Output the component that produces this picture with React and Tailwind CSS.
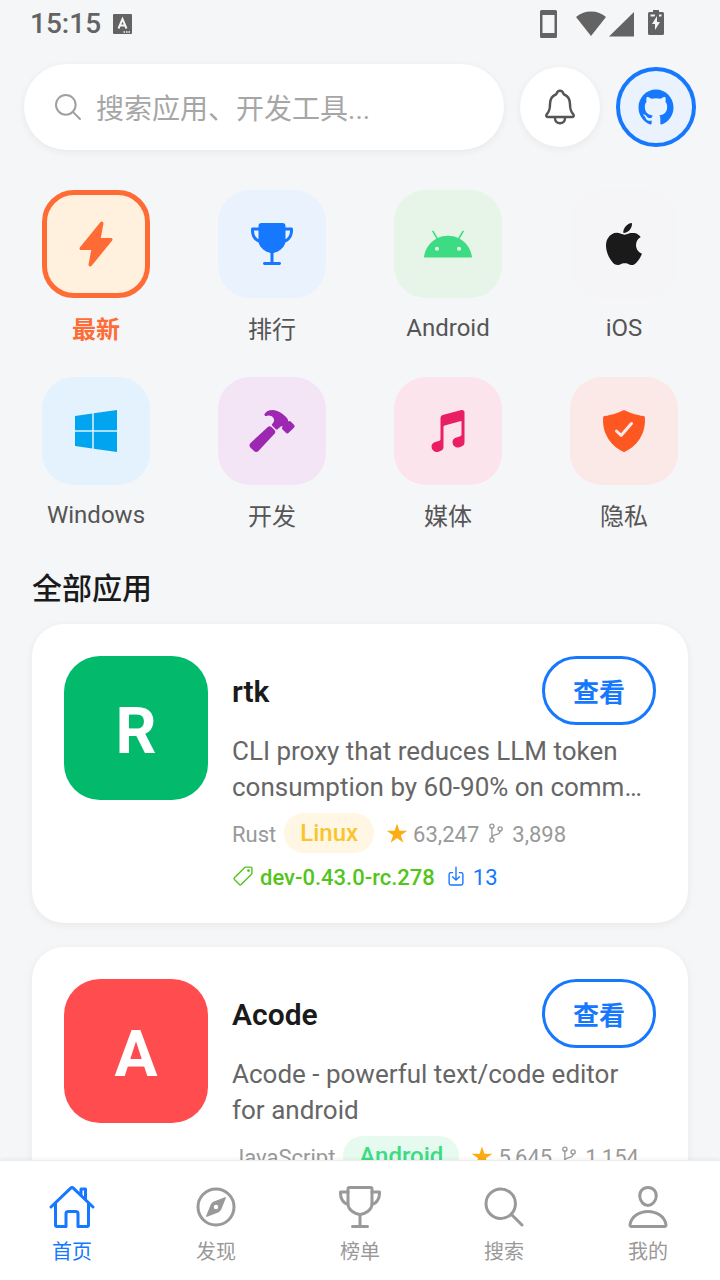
import {
    IoCompassOutline,
    IoDownloadOutline,
    IoFlash,
    IoGitBranchOutline,
    IoHammer,
    IoHomeOutline,
    IoLogoAndroid,
    IoLogoApple,
    IoLogoGithub,
    IoLogoWindows,
    IoMusicalNotes,
    IoNotificationsOutline,
    IoPersonOutline,
    IoPricetagOutline,
    IoSearchOutline,
    IoShieldCheckmark,
    IoStarSharp,
    IoTrophy,
    IoTrophyOutline
} from 'react-icons/io5';
import { useState } from 'react';

const categories = [
    { id: 'latest', label: '最新', icon: IoFlash, tile: 'bg-[#fff1de] text-[#ff6b35]', leading: 'leading-10' },
    { id: 'ranking', label: '排行', icon: IoTrophy, tile: 'bg-[#eaf2fe] text-[#1677ff]', leading: 'leading-10' },
    { id: 'android', label: 'Android', icon: IoLogoAndroid, tile: 'bg-[#e7f5e9] text-[#3ddc84]', leading: 'leading-9' },
    { id: 'ios', label: 'iOS', icon: IoLogoApple, tile: 'bg-[#f5f5f7] text-[#1a1a1a]', leading: 'leading-9' },
    { id: 'windows', label: 'Windows', icon: IoLogoWindows, tile: 'bg-[#e3f2fd] text-[#00a4ef]', leading: 'leading-9' },
    { id: 'dev', label: '开发', icon: IoHammer, tile: 'bg-[#f3e5f5] text-[#9c27b0]', leading: 'leading-10' },
    { id: 'media', label: '媒体', icon: IoMusicalNotes, tile: 'bg-[#fce4ec] text-[#e91e63]', leading: 'leading-10' },
    { id: 'privacy', label: '隐私', icon: IoShieldCheckmark, tile: 'bg-[#fbe9e7] text-[#ff5722]', leading: 'leading-10' }
];

const apps = [
    {
        name: 'rtk',
        letter: 'R',
        color: 'bg-[#03b96b]',
        description: 'CLI proxy that reduces LLM token consumption by 60-90% on common dev commands',
        language: 'Rust',
        platform: 'Linux',
        platformStyle: 'bg-[#fff7e3] text-[#f9c52f]',
        stars: '63,247',
        forks: '3,898',
        version: 'dev-0.43.0-rc.278',
        downloads: '13'
    },
    {
        name: 'Acode',
        letter: 'A',
        color: 'bg-[#ff4d4f]',
        description: 'Acode - powerful text/code editor for android',
        language: 'JavaScript',
        platform: 'Android',
        platformStyle: 'bg-[#e6faef] text-[#3ddc84]',
        stars: '5,645',
        forks: '1,154',
        version: 'v1.11.8',
        downloads: '42'
    }
];

const tabs = [
    { id: 'home', label: '首页', icon: IoHomeOutline },
    { id: 'discover', label: '发现', icon: IoCompassOutline },
    { id: 'charts', label: '榜单', icon: IoTrophyOutline },
    { id: 'search', label: '搜索', icon: IoSearchOutline },
    { id: 'profile', label: '我的', icon: IoPersonOutline }
];

const StatusBar = () => (
    <div className="flex h-12 items-center justify-between pl-[30px] pr-14 text-[#636363]">
        <div className="flex items-center gap-3">
            <span className="text-[28px] font-medium leading-8">15:15</span>
            <svg className="h-5 w-5" viewBox="0 0 20 20" fill="none">
                <rect width="19" height="20" rx="1" fill="currentColor" />
                <path d="M5.5 14.5 9.500 5l4 9.500M7 11.500h5" stroke="#f5f6f8" strokeWidth="2" />
                <path d="M10.500 18H12M13 18h1.500M15.500 18H17" stroke="#f5f6f8" strokeWidth="1.5" />
            </svg>
        </div>
        <svg className="h-7 w-[126px]" viewBox="0 0 126 28" fill="currentColor">
            <path fillRule="evenodd" d="M3.500 0h14a1.500 1.500 0 0 1 1.500 1.500v25a1.500 1.500 0 0 1-1.500 1.500h-14A1.500 1.500 0 0 1 2 26.500v-25A1.500 1.500 0 0 1 3.500 0ZM4.500 5v18h12V5Z" />
            <path d="M38 7C42 3.500 47 1.500 53 1.500S64 3.500 68 7L53 26Z" />
            <path d="M71 26.500 96 2v24.500Z" />
            <path fillRule="evenodd" d="M115 0h6v2h3.500a1.500 1.500 0 0 1 1.500 1.500v20a1.500 1.500 0 0 1-1.500 1.500h-13a1.500 1.500 0 0 1-1.500-1.500v-20A1.500 1.500 0 0 1 111.500 2h3.500ZM119 6l-5 8h3v6l5-8h-3ZM112.500 4.500v2h4l.7-2ZM121 4.500v2h2.500v-2Z" />
        </svg>
    </div>
);

const Header = () => (
    <header className="flex items-center gap-4 px-6 pt-4">
        <label className="flex h-[86px] min-w-0 flex-1 items-center gap-3 rounded-full bg-white px-7 shadow-[0_2px_8px_rgba(0,0,0,0.06)]">
            <IoSearchOutline className="size-8 shrink-0 text-[#a0a0a0]" />
            <input
                type="text"
                aria-label="搜索"
                placeholder="搜索应用、开发工具..."
                className="min-w-0 flex-1 bg-transparent pt-1.5 text-[28px] outline-none placeholder:text-[#a6a6a6]"
            />
        </label>
        <button
            type="button"
            aria-label="通知"
            className="flex size-20 items-center justify-center rounded-full bg-white text-[#555555] shadow-[0_2px_8px_rgba(0,0,0,0.06)]"
        >
            <IoNotificationsOutline className="size-10" />
        </button>
        <button
            type="button"
            aria-label="GitHub"
            className="flex size-20 items-center justify-center rounded-full border-4 border-[#1677ff] bg-[#eaf2fe] text-[#1677ff]"
        >
            <IoLogoGithub className="size-10" />
        </button>
    </header>
);

const CategoryItem = ({ item, active, onSelect }) => {
    const Icon = item.icon;

    return (
        <button type="button" onClick={onSelect} className="flex flex-col items-center gap-3">
            <span
                className={`flex size-[108px] items-center justify-center rounded-[32px] ${item.tile} ${active ? 'border-[5px] border-[#ff6b35]' : ''}`}
            >
                <Icon className="size-12" />
            </span>
            <span
                className={`text-2xl ${item.leading} ${active ? 'font-bold text-[#ff6b35]' : 'text-[#555555]'}`}
            >
                {item.label}
            </span>
        </button>
    );
};

const AppCard = ({ app }) => (
    <article className="flex gap-6 rounded-[32px] bg-white p-8 shadow-[0_2px_8px_rgba(0,0,0,0.06)]">
        <div
            className={`flex size-36 shrink-0 items-center justify-center rounded-[36px] pt-2 text-[64px] font-bold text-white ${app.color}`}
        >
            {app.letter}
        </div>
        <div className="min-w-0 flex-1">
            <div className="flex items-center justify-between">
                <h3 className="pt-0.5 text-[30px] font-semibold text-[#1a1a1a]">{app.name}</h3>
                <button
                    type="button"
                    className="h-[69px] rounded-full border-3 border-[#1677ff] px-7 pt-1.5 text-[26px] font-bold text-[#1677ff]"
                >
                    查看
                </button>
            </div>
            <p className="mt-2 line-clamp-2 text-[26px] leading-9 text-[#666666]">{app.description}</p>
            <div className="mt-2 flex items-center text-[22px] leading-7 text-[#999999]">
                <span className="pt-1">{app.language}</span>
                <span className={`ml-2 rounded-full px-4 text-2xl font-medium leading-10 ${app.platformStyle}`}>
                    {app.platform}
                </span>
                <IoStarSharp className="ml-3 size-[22px] text-[#faad14]" />
                <span className="ml-[5px] pt-1">{app.stars}</span>
                <IoGitBranchOutline className="ml-1.5 size-[22px]" />
                <span className="ml-[5px] pt-1">{app.forks}</span>
            </div>
            <div className="mt-2 flex items-center text-[22px] leading-[26px]">
                <IoPricetagOutline className="size-[22px] text-[#52c41a]" />
                <span className="ml-1.5 pt-1 font-medium text-[#52c41a]">{app.version}</span>
                <IoDownloadOutline className="ml-2.5 size-[22px] text-[#1677ff]" />
                <span className="ml-1.5 pt-1 text-[#1677ff]">{app.downloads}</span>
            </div>
        </div>
    </article>
);

const TabBar = ({ current, onChange }) => (
    <nav className="relative grid shrink-0 grid-cols-5 border-t border-[#ededed] bg-white pb-3 pt-[22px] shadow-[0_-1px_4px_rgba(0,0,0,0.06)]">
        {tabs.map(({ id, label, icon: Icon }) => (
            <button
                key={id}
                type="button"
                onClick={() => onChange(id)}
                className={`flex flex-col items-center gap-[5px] ${current === id ? 'text-[#1677ff]' : 'text-[#999999]'}`}
            >
                <Icon className="size-12" />
                <span className="text-xl leading-8">{label}</span>
            </button>
        ))}
    </nav>
);

const App = () => {
    const [category, setCategory] = useState('latest');
    const [tab, setTab] = useState('home');

    return (
        <div className="flex h-screen flex-col bg-[#f5f6f8] font-['Roboto','Noto_Sans_CJK_SC',sans-serif]">
            <StatusBar />
            <main className="min-h-0 flex-1 overflow-y-auto [scrollbar-width:none]">
                <Header />

                {/* Categories */}
                <section className="mt-10 grid grid-cols-4 gap-y-[27px] px-2">
                    {categories.map((item) => (
                        <CategoryItem
                            key={item.id}
                            item={item}
                            active={item.id === category}
                            onSelect={() => setCategory(item.id)}
                        />
                    ))}
                </section>

                {/* App list */}
                <section className="px-8 py-7">
                    <h2 className="text-[30px] font-medium leading-[47px] text-[#1a1a1a]">全部应用</h2>
                    <div className="mt-3 space-y-6">
                        {apps.map((app) => (
                            <AppCard key={app.name} app={app} />
                        ))}
                    </div>
                </section>
            </main>
            <TabBar current={tab} onChange={setTab} />
        </div>
    );
};

export default App;
